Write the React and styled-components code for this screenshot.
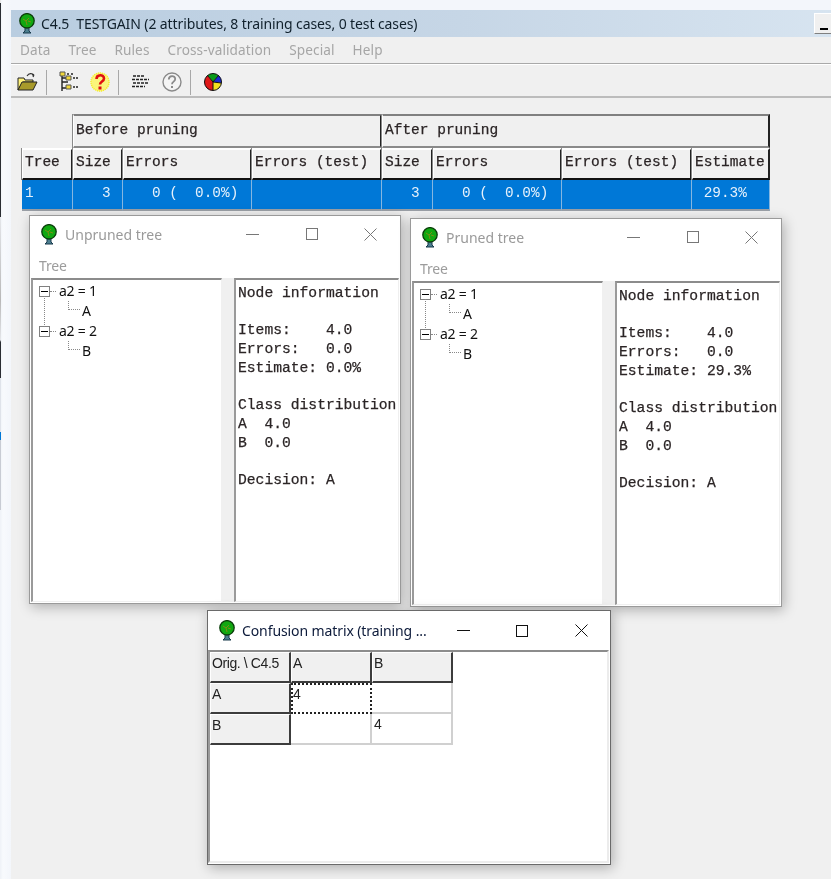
import React from 'react';
import styled, { createGlobalStyle } from 'styled-components';

const Global = createGlobalStyle`
  html, body { margin: 0; padding: 0; height: 100%; overflow: hidden; background: #f5f8fc; }
  #root { height: 100%; }
`;

const ui = `"Noto Sans", "Open Sans", sans-serif`;
const mono = `"Liberation Mono", "Courier New", monospace`;

const Screen = styled.div`
  position: relative; width: 831px; height: 879px; overflow: hidden;
  padding: 10px 0 0 11px; box-sizing: border-box;
  background:
    linear-gradient(180deg, #e8e8e8 0, #e8e8e8 3px, #2a2d33 3px, #2a2d33 217px, #e4e6ea 217px, #b8b8b8 300px, #e4e6ea 340px, #2a2d33 342px, #2a2d33 378px, #dfe3ea 378px, #dfe3ea 432px, #0078d7 432px, #0078d7 440px, #c8ccd4 440px, #c8ccd4 510px, #f0f3f8 510px) 0 0 / 1px 100% no-repeat,
    linear-gradient(90deg, #eef2f7 0, #f8fafd 3px, #f3f6fb 11px);
  filter: blur(0.3px);
`;
const MainWindow = styled.div`
  height: 100%; background: #f0f0f0; display: flex; flex-direction: column;
`;
const TitleBar = styled.div`
  height: 27px; flex: none; display: flex; align-items: center; padding-left: 8px;
  background: linear-gradient(90deg, #b9cde0, #c6d6e6 55%, #d7e4f0);
  font: 14px ${ui}; color: #10202c; gap: 6px; white-space: pre;
`;
const TitleText = styled.span`flex: 1; letter-spacing: -0.1px;`;
const MinButton = styled.div`
  width: 17px; height: 21px; flex: none; background: #f0f0f0; box-sizing: border-box;
  border-top: 1px solid #fff; border-left: 1px solid #fff; border-bottom: 1px solid #808080;
  position: relative;
  &::after { content: ''; position: absolute; left: 5px; bottom: 3px; width: 8px; height: 2px; background: #000; }
`;
const MenuBar = styled.div`
  flex: none; display: flex; align-items: center; padding: 0 0 1px 9px; gap: 18px;
  border-bottom: 1px solid #a9a9a9; box-sizing: border-box; height: 27px;
  font: 13.6px ${ui}; color: #a6a6a6; letter-spacing: 0.1px;
`;
const ToolBar = styled.div`
  height: 34px; box-sizing: border-box; flex: none; display: flex; align-items: center; padding: 3px 0 0 1px;
  border-top: 1px solid #fff; border-bottom: 2px solid #bcbcbc;
`;
const ToolButton = styled.div`
  width: 31px; height: 24px; display: flex; align-items: center; justify-content: center;
`;
const ToolSep = styled.div`
  width: 1px; height: 25px; background: #a8a8a8; margin: 0 6px 0 3px;
`;
const TableWrap = styled.div`
  margin: 16px 0 0 11px; width: 749px;
  display: grid; grid-template-columns: 51px 50px 129px 130px 51px 129px 130px 78px;
  grid-template-rows: 34px 32px 31px; font: 14.5px ${mono}; color: #2b2526;
  -webkit-text-stroke: 0.25px #2b2526;
`;
const Blank = styled.div``;
const HeadCell = styled.div`
  grid-column: span ${p => p.$span || 1}; background: #f0f0f0; box-sizing: border-box;
  border-top: 2px solid ${p => (p.$group ? '#808080' : '#ffffff')};
  border-left: 1px solid #fff;
  box-shadow: -1px 0 0 #8a8a8a;
  border-right: 2px solid #222; border-bottom: 2px solid ${p => (p.$group ? '#8a8a8a' : '#111')};
  padding: ${p => (p.$group ? 4 : 2)}px 0 0 2px; white-space: pre; overflow: hidden; line-height: 20px;
`;
const DataCell = styled.div`
  background: #0078d7; color: #e6f1fb; box-sizing: border-box; white-space: pre;
  -webkit-text-stroke: 0;
  border-right: 1px solid #85b6e0; border-bottom: 2px solid #9a9fa6;
  padding: 3px 0 0 3px; line-height: 20px; font-size: 14.4px;
`;

const Win = styled.div`
  position: absolute; left: ${p => p.$x}px; top: ${p => p.$y}px;
  width: ${p => p.$w}px; height: ${p => p.$h}px; box-sizing: border-box;
  background: #fff; border: 1px solid ${p => (p.$active ? '#6a6a6a' : '#9a9a9a')};
  box-shadow: 2px 3px 12px rgba(0,0,0,.28);
  display: flex; flex-direction: column;
`;
const WinTitle = styled.div`
  height: ${p => (p.$active ? 39 : 36)}px; flex: none; display: flex; align-items: center; padding-left: 11px;
  gap: ${p => (p.$active ? 7 : 8)}px;
  font: 14px ${ui}; color: ${p => (p.$active ? '#0c1a3a' : '#9a9a9a')};
  letter-spacing: ${p => (p.$active ? -0.1 : 0)}px;
`;
const WinName = styled.span`flex: 1; white-space: nowrap;`;
const WinControls = styled.div`display: flex; flex: none;`;
const WinControl = styled.div`
  width: 59px; height: 24px; flex: none; display: flex; align-items: center; justify-content: center;
`;
const WinMenu = styled.div`
  height: 26px; flex: none; padding: 5px 0 0 9px; box-sizing: border-box; font: 14px ${ui}; color: #9c9c9c; line-height: 18px;
  letter-spacing: -0.2px;
`;
const Panes = styled.div`
  flex: 1; display: flex; background: #f0f0f0; margin: 0 1px 1px 1px; min-height: 0;
`;
const Sunken = styled.div`
  background: #fff; box-sizing: border-box;
  border-top: 2px solid #8c8c8c; border-left: 2px solid #9a9a9a;
  border-right: 1px solid #f0f0f0; border-bottom: 1px solid #f0f0f0;
`;
const TreePane = styled(Sunken)`
  width: 191px; flex: none; padding: 1px 0 0 6px; font: 14px/20px ${ui}; color: #111;
`;
const Splitter = styled.div`width: 12px; flex: none;`;
const InfoPane = styled(Sunken)`
  flex: 1; padding: 4px 0 0 2px; font: 14.67px/18.7px ${mono}; color: #2b2526; white-space: pre; overflow: hidden;
  -webkit-text-stroke: 0.25px #2b2526;
`;
const TreeRow = styled.div`
  height: 20px; display: flex; align-items: center; position: relative;
  padding-left: ${p => (p.$leaf ? 43 : 0)}px; letter-spacing: -0.25px;
`;
const Expander = styled.span`
  width: 9px; height: 9px; border: 1px solid #808080; box-sizing: content-box; background: #fff;
  position: relative; margin-right: 9px; flex: none;
  &::before { content: ''; position: absolute; left: 1px; right: 1px; top: 4px; height: 1px; background: #000; }
  &::after { content: ''; position: absolute; left: 10px; top: 4px; width: 6px; border-top: 1px dotted #888; }
`;
const Trunk = styled.span`
  position: absolute; left: 5px; top: 15px; height: 29px; border-left: 1px dotted #888;
`;
const Elbow = styled.span`
  position: absolute; left: 29px; top: 0; width: 11px; height: 8px;
  border-left: 1px dotted #888; border-bottom: 1px dotted #888;
`;

const Matrix = styled(Sunken)`
  flex: 1; margin: 0 1px 1px 0; border-bottom: 2px solid #ececec; border-right: 2px solid #ececec;
`;
const MatrixGrid = styled.div`
  display: grid; grid-template-columns: 81px 81px 81px; grid-auto-rows: 31px; width: 243px;
  font: 14px/21px "Liberation Sans", Arial, sans-serif; color: #222; letter-spacing: -0.4px;
`;
const MatrixHead = styled.div`
  background: #f0f0f0; box-sizing: border-box; padding: 0 0 0 1px; white-space: nowrap;
  border-top: 1px solid #fff; border-left: 1px solid #fff;
  border-right: 2px solid #3c3c3c; border-bottom: 2px solid #3c3c3c;
`;
const MatrixCell = styled.div`
  background: #fff; box-sizing: border-box; padding: 0 0 0 2px;
  ${p => (p.$focus
    ? 'border: 2px dotted #222; padding-left: 0; line-height: 19px;'
    : 'border-right: 2px solid #d0d0d0; border-bottom: 2px solid #d0d0d0;')}
`;

const TreeLogo = () => (
  <svg width="16" height="21" viewBox="0 0 16 21" style={{ flex: 'none' }}>
    <path d="M6 13h4v5l2 2H4l2-2z" fill="#4d7f90" stroke="#16384a" />
    <circle cx="8" cy="7.8" r="7.2" fill="#11a811" stroke="#0b3d0b" strokeWidth="1.3" />
    <path d="M4 6l3 2 3-3M7 8l1 4M9 8l3 1" stroke="#7d8f12" strokeWidth="1" fill="none" />
  </svg>
);
const FolderIcon = () => (
  <svg width="21" height="20" viewBox="0 0 21 20">
    <path d="M1 6h6l1 2h8v2H6L1 18z" fill="#fff27a" stroke="#222" />
    <path d="M1 18l4-8h15l-4 8z" fill="#a89a2a" stroke="#222" />
    <path d="M10 4c2-3 5-3 7-1M17 3l-1 2M17 3l-2 0" stroke="#333" strokeWidth="1.2" fill="none" />
  </svg>
);
const NodesIcon = () => (
  <svg width="20" height="22" viewBox="0 0 20 22">
    <path d="M3 2v18M3 7h4M3 17h4M3 11h4" stroke="#222" strokeWidth="1.4" />
    <path d="M1 1h5v4H1zM7 5h5v4H7zM7 14h5v4H7z" fill="#f2d83a" stroke="#555" />
    <path d="M8 3h2M12 3h2M14 7h2M17 7h2M14 16h2M17 16h2M7 11h2" stroke="#222" strokeWidth="1.3" />
  </svg>
);
const YellowHelp = () => (
  <svg width="20" height="20" viewBox="0 0 20 20">
    <circle cx="10" cy="10" r="9.5" fill="#fbf57a" />
    <circle cx="10" cy="10" r="9" fill="none" stroke="#f5ea30" strokeWidth="1.5" strokeDasharray="1 1" />
    <path d="M6.5 7c0-5 7.5-5 7.5-.5 0 3-4 3-4 6" fill="none" stroke="#e01010" strokeWidth="2.6" />
    <rect x="8.5" y="14.5" width="3" height="3" fill="#e01010" />
  </svg>
);
const ListIcon = () => (
  <svg width="18" height="14" viewBox="0 0 18 14">
    {[1, 4.5, 8, 11.5].map((y, i) => (
      <path key={y} d={`M${i % 2 ? 0 : 1} ${y}H${i === 1 || i === 2 ? 17 : 13}`} stroke="#222" strokeWidth="1.3" strokeDasharray="3 1" />
    ))}
  </svg>
);
const GreyHelp = () => (
  <svg width="20" height="20" viewBox="0 0 20 20">
    <circle cx="10" cy="10" r="9" fill="#f4f4f4" stroke="#8a8a8a" strokeWidth="1.4" />
    <path d="M6.8 7.5c0-4.5 6.4-4.5 6.4-.5 0 2.7-3.2 2.5-3.2 5.2" fill="none" stroke="#8a8a8a" strokeWidth="1.8" />
    <rect x="9" y="14" width="2" height="2" fill="#8a8a8a" />
  </svg>
);
const PieIcon = () => (
  <svg width="18" height="18" viewBox="0 0 18 18">
    <path d="M9 9L3.5 2.5A8.5 8.5 0 0 1 14.5 2.5z" fill="#0a9a1a" />
    <path d="M9 9l5.5-6.5A8.5 8.5 0 0 1 17.4 10z" fill="#1a2ad0" />
    <path d="M9 9l8.4 1A8.5 8.5 0 0 1 9 17.5z" fill="#f4e020" />
    <path d="M9 9v8.5A8.5 8.5 0 0 1 3.5 2.5z" fill="#e01818" />
    <circle cx="9" cy="9" r="8.5" fill="none" stroke="#111" />
    <path d="M9 9L3.5 2.5M9 9l5.5-6.5M9 9l8.4 1M9 9v8.5" stroke="#111" />
  </svg>
);
const MinIcon = ({ c }) => <svg width="13" height="13" viewBox="0 0 13 13"><path d="M0 6.5h13" stroke={c} /></svg>;
const MaxIcon = ({ c }) => <svg width="12" height="12" viewBox="0 0 12 12"><rect x=".5" y=".5" width="11" height="11" fill="none" stroke={c} /></svg>;
const CloseIcon = ({ c }) => <svg width="13" height="13" viewBox="0 0 13 13"><path d="M.5.5l12 12M12.5.5l-12 12" stroke={c} /></svg>;

const Controls = ({ active }) => {
  const c = active ? '#111' : '#777';
  return (
    <WinControls>
      <WinControl><MinIcon c={c} /></WinControl>
      <WinControl><MaxIcon c={c} /></WinControl>
      <WinControl><CloseIcon c={c} /></WinControl>
    </WinControls>
  );
};

const info = est => `Node information

Items:    4.0
Errors:   0.0
Estimate: ${est}

Class distribution
A  4.0
B  0.0

Decision: A`;

const TreeWindow = ({ x, y, title, est }) => (
  <Win $x={x} $y={y} $w={372} $h={389}>
    <WinTitle>
      <TreeLogo /><WinName>{title}</WinName><Controls />
    </WinTitle>
    <WinMenu>Tree</WinMenu>
    <Panes>
      <TreePane>
        <TreeRow><Expander /><Trunk />a2 = 1</TreeRow>
        <TreeRow $leaf><Elbow />A</TreeRow>
        <TreeRow><Expander />a2 = 2</TreeRow>
        <TreeRow $leaf><Elbow />B</TreeRow>
      </TreePane>
      <Splitter />
      <InfoPane>{info(est)}</InfoPane>
    </Panes>
  </Win>
);

export default function App() {
  return (
    <>
      <Global />
      <Screen>
        <MainWindow>
          <TitleBar>
            <TreeLogo />
            <TitleText>C4.5  TESTGAIN (2 attributes, 8 training cases, 0 test cases)</TitleText>
            <MinButton />
          </TitleBar>
          <MenuBar>
            <span>Data</span><span>Tree</span><span>Rules</span><span>Cross-validation</span><span>Special</span><span>Help</span>
          </MenuBar>
          <ToolBar>
            <ToolButton><FolderIcon /></ToolButton>
            <ToolSep />
            <ToolButton><NodesIcon /></ToolButton>
            <ToolButton><YellowHelp /></ToolButton>
            <ToolSep />
            <ToolButton><ListIcon /></ToolButton>
            <ToolButton><GreyHelp /></ToolButton>
            <ToolSep />
            <ToolButton><PieIcon /></ToolButton>
          </ToolBar>
          <TableWrap>
            <Blank />
            <HeadCell $group $span={3}>Before pruning</HeadCell>
            <HeadCell $group $span={4}>After pruning</HeadCell>
            {['Tree', 'Size', 'Errors', 'Errors (test)', 'Size', 'Errors', 'Errors (test)', 'Estimate'].map((t, i) => (
              <HeadCell key={i}>{t}</HeadCell>
            ))}
            {['1', '   3', '   0 (  0.0%)', '', '   3', '   0 (  0.0%)', '', ' 29.3%'].map((t, i) => (
              <DataCell key={i}>{t}</DataCell>
            ))}
          </TableWrap>
        </MainWindow>
        <TreeWindow x={29} y={215} title="Unpruned tree" est="0.0%" />
        <TreeWindow x={410} y={218} title="Pruned tree" est="29.3%" />
        <Win $active $x={207} $y={610} $w={404} $h={255}>
          <WinTitle $active>
            <TreeLogo /><WinName>Confusion matrix (training ...</WinName><Controls active />
          </WinTitle>
          <Matrix>
            <MatrixGrid>
              <MatrixHead>Orig. \ C4.5</MatrixHead><MatrixHead>A</MatrixHead><MatrixHead>B</MatrixHead>
              <MatrixHead>A</MatrixHead><MatrixCell $focus>4</MatrixCell><MatrixCell />
              <MatrixHead>B</MatrixHead><MatrixCell /><MatrixCell>4</MatrixCell>
            </MatrixGrid>
          </Matrix>
        </Win>
      </Screen>
    </>
  );
}
